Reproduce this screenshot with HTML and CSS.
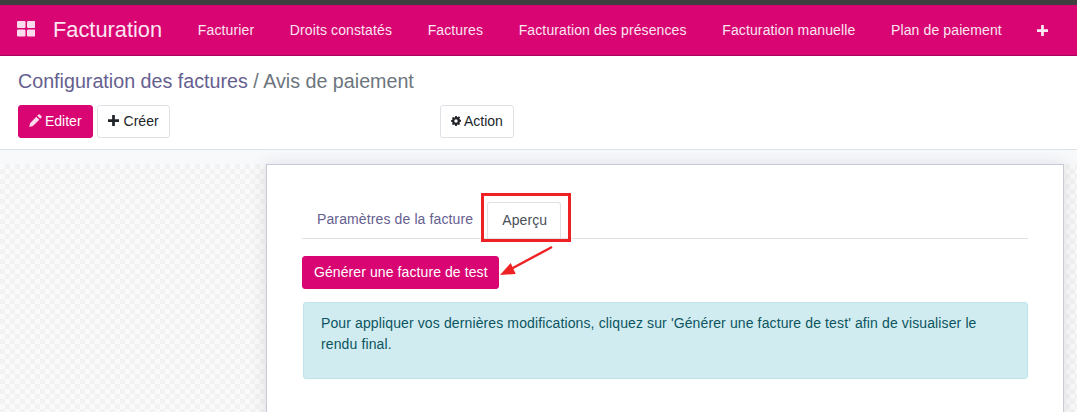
FILE: index.html
```html
<!DOCTYPE html>
<html lang="fr">
<head>
  <meta charset="UTF-8" />
  <title>Facturation</title>
  <link rel="stylesheet" href="styles.css">
</head>
<body>

  <!-- Barre de navigation -->
  <header class="navbar">
    <svg class="apps-icon" viewBox="0 0 18 16" width="18" height="16">
      <rect x="0" y="0" width="8.5" height="7" rx="1.2"/>
      <rect x="10" y="0" width="8.5" height="7" rx="1.2"/>
      <rect x="0" y="8.5" width="8.5" height="7" rx="1.2"/>
      <rect x="10" y="8.5" width="8.5" height="7" rx="1.2"/>
    </svg>
    <span class="brand">Facturation</span>
    <nav class="menu">
      <a>Facturier</a>
      <a>Droits constatés</a>
      <a>Factures</a>
      <a>Facturation des présences</a>
      <a>Facturation manuelle</a>
      <a>Plan de paiement</a>
      <a class="menu-more"><svg viewBox="0 0 12 12" width="11" height="11"><path d="M4.5 0h3v4.5H12v3H7.5V12h-3V7.5H0v-3h4.5z"/></svg></a>
    </nav>
  </header>

  <!-- Panneau de contrôle -->
  <section class="control-panel">
    <div class="breadcrumb"><span class="crumb-link">Configuration des factures</span> <span class="crumb-sep">/</span> Avis de paiement</div>
    <div class="actions">
      <div class="actions-left">
        <button class="btn btn-primary">
          <svg class="ico" viewBox="0 0 14 14" width="13" height="13"><path d="M10.2.6a1 1 0 0 1 1.4 0l1.8 1.8a1 1 0 0 1 0 1.4l-1.3 1.3-3.2-3.2zM7.9 2.9l3.2 3.2-6.9 6.9-3.9.9.8-4z"/></svg>Editer
        </button>
        <button class="btn">
          <svg class="ico ico-plus" viewBox="0 0 12 12" width="11" height="11"><path d="M4.5 0h3v4.5H12v3H7.5V12h-3V7.5H0v-3h4.5z"/></svg>Créer
        </button>
      </div>
      <button class="btn">
        <svg class="ico" viewBox="0 0 12 12" width="10" height="10"><path fill-rule="evenodd" d="M5 0h2l.3 1.5 1-.4 1.2-.7 1.4 1.4-.8 1.3.4.9L12 5v2l-1.5.3-.4 1 .8 1.2-1.4 1.4-1.2-.8-1 .4L7 12H5l-.3-1.5-1-.4-1.2.8-1.4-1.4.8-1.2-.4-1L0 7V5l1.5-.3.4-1-.8-1.2 1.4-1.4 1.2.7 1 .4zM6 4a2 2 0 1 0 0 4 2 2 0 0 0 0-4z"/></svg>Action
      </button>
    </div>
  </section>

  <!-- Feuille -->
  <main class="sheet-bg">
    <div class="sheet">
      <ul class="tabs">
        <li class="tab">Paramètres de la facture</li>
        <li class="tab tab-active">Aperçu</li>
      </ul>
      <button class="btn btn-primary btn-test">Générer une facture de test</button>
      <div class="alert">Pour appliquer vos dernières modifications, cliquez sur 'Générer une facture de test' afin de visualiser le rendu final.</div>

      <!-- Annotations de la capture -->
      <div class="mark-box"></div>
      <svg class="mark-arrow" viewBox="0 0 60 40" width="60" height="40">
        <line x1="52" y1="5" x2="11" y2="27" stroke="#ee2224" stroke-width="2.4"/>
        <polygon points="0,33 10.7,21 15.7,32" fill="#ee2224"/>
      </svg>
    </div>
  </main>

</body>
</html>
```

FILE: styles.css
```css
html, body {
  margin: 0;
  padding: 0;
  height: 412px;
  overflow: hidden;
  background: #fff;
  font-family: "Liberation Sans", Arial, sans-serif;
  font-size: 14px;
  letter-spacing: 0.12px;
  color: #212529;
}

.navbar {
  height: 50px;
  box-sizing: content-box;
  border-top: 5px solid #3f3f3f;
  border-bottom: 1px solid #a8045a;
  background: #d80572;
  color: #fff;
  display: flex;
  align-items: center;
  padding-left: 17px;
}

.apps-icon {
  fill: #fbdcec;
  margin-right: 18px;
  margin-top: -2px;
}

.brand {
  font-size: 21.8px;
  letter-spacing: 0;
  color: #fbe6f1;
  margin-right: 18px;
}

.menu {
  display: flex;
  align-items: center;
}

.menu a {
  padding: 0 17.8px;
  color: #fbe6f1;
}

.menu-more svg {
  fill: #fbe6f1;
  display: block;
}

.control-panel {
  height: 93px;
  padding: 0 18px;
  border-bottom: 1px solid #dee2e6;
}

.breadcrumb {
  font-size: 19.7px;
  letter-spacing: 0;
  color: #6c757d;
  padding-top: 13px;
  line-height: 24px;
}

.crumb-link {
  color: #65608f;
}

.crumb-sep {
  color: #6c757d;
}

.actions {
  display: flex;
  margin-top: 12px;
}

.actions-left {
  display: flex;
  gap: 4px;
  width: 422px;
}

.btn {
  height: 33px;
  padding: 0 10px 2px;
  border: 1px solid #dee2e6;
  border-radius: 3px;
  background: #fff;
  color: #212529;
  font-family: inherit;
  font-size: 14px;
  letter-spacing: 0;
  display: inline-flex;
  align-items: center;
}

.ico {
  fill: #212529;
  margin-right: 3px;
}

.ico-plus {
  margin-right: 5px;
}

.btn-primary {
  background: #d80572;
  border-color: #d80572;
  color: #fff;
}

.btn-primary .ico {
  fill: #fbdcec;
}

.sheet-bg {
  height: 262px;
  overflow: hidden;
  padding-top: 14px;
  box-sizing: border-box;
  display: flex;
  justify-content: flex-end;
  padding-right: 13px;
  background:
    linear-gradient(#f8f9fb 14px, transparent 14px),
    repeating-conic-gradient(#f2f2f2 0 25%, #fafafa 0 50%) 0 14px / 10px 10px;
}

.sheet {
  position: relative;
  box-sizing: border-box;
  width: 798px;
  height: 300px;
  padding: 37px 35px 0;
  background: #fff;
  border: 1px solid #c9cad8;
  box-shadow: 0 0 14px rgba(130, 130, 150, 0.22);
}

.tabs {
  list-style: none;
  margin: 0;
  padding: 0;
  height: 36px;
  display: flex;
  border-bottom: 1px solid #dee2e6;
}

.tab {
  padding: 0 14px 0 15px;
  line-height: 35px;
  color: #65608f;
  font-size: 14px;
}

.tab-active {
  height: 35px;
  padding: 0 13px 0 14px;
  color: #495057;
  border: 1px solid #dee2e6;
  border-bottom: 0;
  border-radius: 3px 3px 0 0;
}

.btn-test {
  margin-top: 17px;
  display: flex;
  padding: 0 10px 2px 11px;
  letter-spacing: 0.09px;
}

.alert {
  box-sizing: border-box;
  width: 725px;
  height: 77px;
  margin: 13px 0 0 1px;
  padding: 10px 17px;
  line-height: 21px;
  color: #0c5460;
  background: #d1ecf1;
  border: 1px solid #bee5eb;
  border-radius: 3px;
}

.mark-box {
  position: absolute;
  left: 214px;
  top: 28px;
  width: 84px;
  height: 43px;
  border: 3px solid #ee2224;
}

.mark-arrow {
  position: absolute;
  left: 233px;
  top: 77px;
}
```
